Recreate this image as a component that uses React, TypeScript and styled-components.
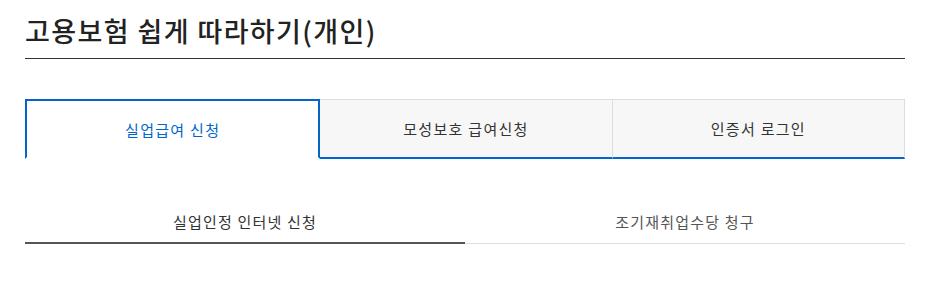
import React, { useState } from 'react';
import styled, { createGlobalStyle } from 'styled-components';

const GlobalStyle = createGlobalStyle`
  * {
    box-sizing: border-box;
  }
  body {
    margin: 0;
    background: #fff;
    font-family: 'Noto Sans CJK KR', 'Noto Sans', sans-serif;
    color: #333;
  }
`;

const mainTabs = ['실업급여 신청', '모성보호 급여신청', '인증서 로그인'];
const subTabs = ['실업인정 인터넷 신청', '조기재취업수당 청구'];

const App: React.FC = () => {
  const [main, setMain] = useState(0);
  const [sub, setSub] = useState(0);

  return (
    <>
      <GlobalStyle />
      <Container>
        <Title>고용보험 쉽게 따라하기(개인)</Title>
        <TabList>
          {mainTabs.map((label, i) => (
            <Tab key={label} $active={i === main} onClick={() => setMain(i)}>
              {label}
            </Tab>
          ))}
        </TabList>
        <SubTabList>
          {subTabs.map((label, i) => (
            <SubTab key={label} $active={i === sub} onClick={() => setSub(i)}>
              {label}
            </SubTab>
          ))}
        </SubTabList>
      </Container>
    </>
  );
};

export default App;

const Container = styled.div`
  width: 880px;
  margin-left: 25px;
  padding-top: 13px;
`;

const Title = styled.h2`
  margin: 0;
  font-size: 27px;
  font-weight: 500;
  line-height: 36px;
  color: #222;
  padding-bottom: 9px;
  border-bottom: 1px solid #333;
  letter-spacing: 1.4px;
`;

const TabList = styled.div`
  display: flex;
  margin-top: 40px;
`;

const Tab = styled.button<{ $active: boolean }>`
  flex: 1;
  height: 60px;
  padding: 0;
  font-family: inherit;
  font-size: 15px;
  letter-spacing: 1.3px;
  cursor: pointer;
  background: ${(p) => (p.$active ? '#fff' : '#f7f7f7')};
  color: ${(p) => (p.$active ? '#0066cc' : '#333')};
  border: ${(p) => (p.$active ? '2px solid #0066cc' : 'none')};
  border-top: ${(p) => (p.$active ? '2px solid #0066cc' : '1px solid #ddd')};
  border-right: ${(p) => (p.$active ? '2px solid #0066cc' : '1px solid #ddd')};
  border-bottom: ${(p) => (p.$active ? '2px solid #fff' : '2px solid #0066cc')};
`;

const SubTabList = styled.div`
  display: flex;
  margin-top: 40px;
`;

const SubTab = styled.button<{ $active: boolean }>`
  flex: 1;
  height: 45px;
  padding: 1px 0 0;
  font-family: inherit;
  font-size: 15px;
  letter-spacing: 1.2px;
  background: none;
  cursor: pointer;
  border: none;
  color: ${(p) => (p.$active ? '#333' : '#555')};
  border-bottom: ${(p) => (p.$active ? '2px solid #555' : '1px solid #ddd')};
`;
